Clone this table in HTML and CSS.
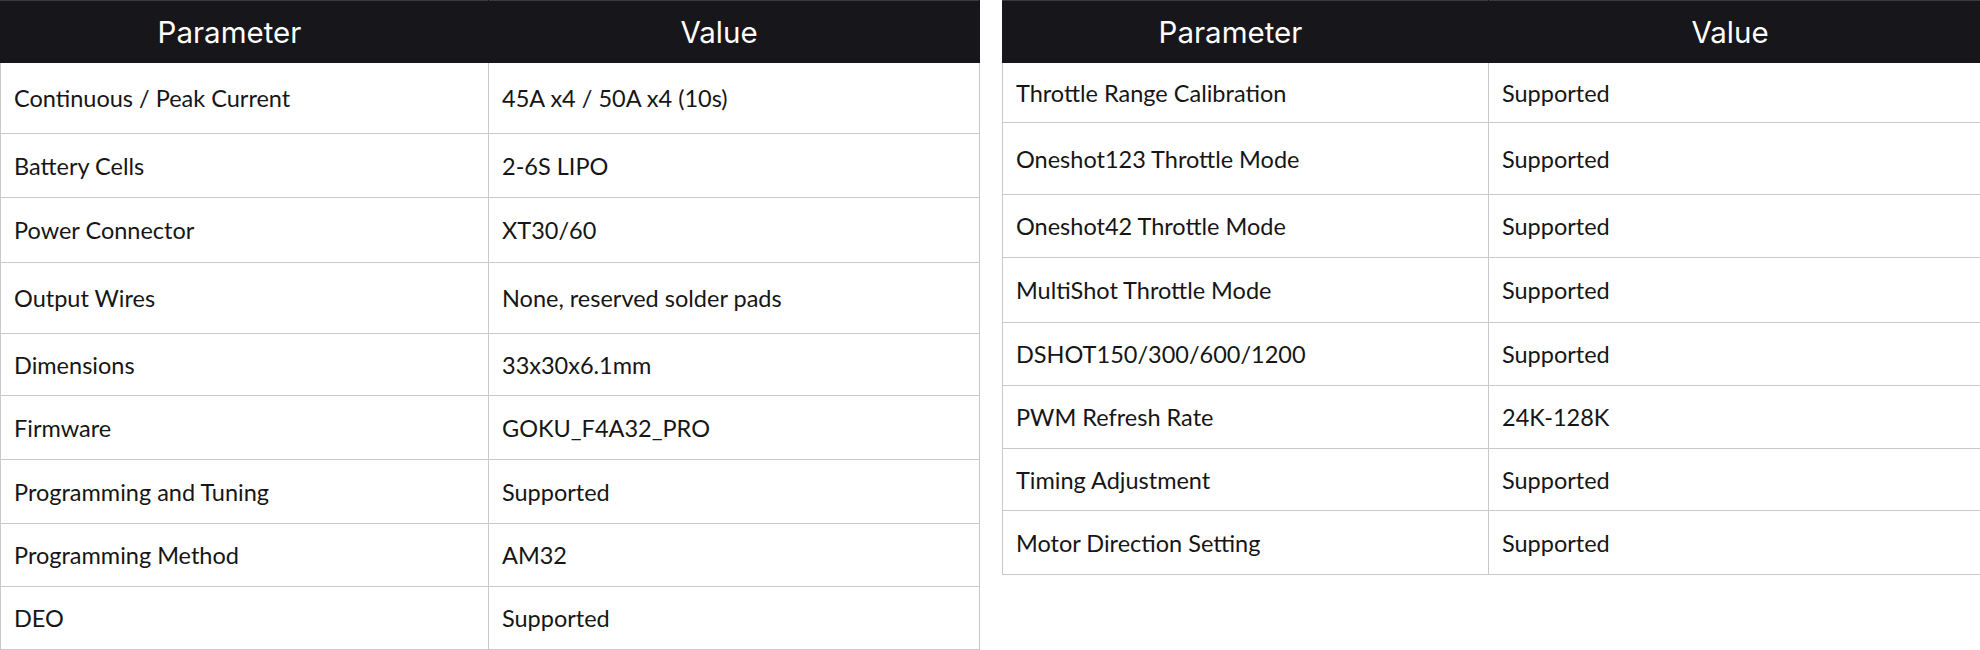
FILE: index.html
```html
<!DOCTYPE html>
<html>
<head>
<meta charset="utf-8">
<link rel="stylesheet" href="styles.css">
</head>
<body>
<div class="page">
  <table class="spec spec-left">
    <colgroup><col class="c1"><col class="c2"></colgroup>
    <thead><tr><th>Parameter</th><th>Value</th></tr></thead>
    <tbody>
      <tr class="h71"><td>Continuous / Peak Current</td><td>45A x4 / 50A x4 (10s)</td></tr>
      <tr class="h64"><td>Battery Cells</td><td>2-6S LIPO</td></tr>
      <tr class="h65"><td>Power Connector</td><td>XT30/60</td></tr>
      <tr class="h71"><td>Output Wires</td><td>None, reserved solder pads</td></tr>
      <tr class="h62"><td>Dimensions</td><td>33x30x6.1mm</td></tr>
      <tr class="h64"><td>Firmware</td><td>GOKU_F4A32_PRO</td></tr>
      <tr class="h64"><td>Programming and Tuning</td><td>Supported</td></tr>
      <tr class="h63"><td>Programming Method</td><td>AM32</td></tr>
      <tr class="h63"><td>DEO</td><td>Supported</td></tr>
    </tbody>
  </table>
  <table class="spec spec-right">
    <colgroup><col class="c1"><col class="c2"></colgroup>
    <thead><tr><th>Parameter</th><th>Value</th></tr></thead>
    <tbody>
      <tr class="h60"><td>Throttle Range Calibration</td><td>Supported</td></tr>
      <tr class="h72"><td>Oneshot123 Throttle Mode</td><td>Supported</td></tr>
      <tr class="h63"><td>Oneshot42 Throttle Mode</td><td>Supported</td></tr>
      <tr class="h65"><td>MultiShot Throttle Mode</td><td>Supported</td></tr>
      <tr class="h63"><td>DSHOT150/300/600/1200</td><td>Supported</td></tr>
      <tr class="h63"><td>PWM Refresh Rate</td><td>24K-128K</td></tr>
      <tr class="h62"><td>Timing Adjustment</td><td>Supported</td></tr>
      <tr class="h64"><td>Motor Direction Setting</td><td>Supported</td></tr>
    </tbody>
  </table>
</div>
</body>
</html>
```
FILE: styles.css
```css
html, body {
  margin: 0;
  padding: 0;
  background: #ffffff;
  overflow: hidden;
}
body {
  width: 1980px;
  height: 650px;
  font-family: "Lato", "Liberation Sans", sans-serif;
  color: #161616;
}
.page {
  display: flex;
  align-items: flex-start;
  gap: 22px;
  width: 2100px;
}
.spec {
  border-collapse: collapse;
  table-layout: fixed;
  flex: none;
}
.spec-left { width: 980px; }
.spec-left .c1 { width: 488px; }
.spec-right { width: 1000px; }
.spec-right .c1 { width: 486px; }
.spec th {
  background: #17161a;
  color: #ffffff;
  font-family: "Inter", "Lato", sans-serif;
  font-weight: 400;
  font-size: 29.5px;
  height: 61px;
  padding: 0 30px 0 0;
  text-align: center;
  border: 1px solid #17161a;
  border-top-color: #3a3a3e;
}
.spec td {
  border: 1px solid #c9c9c9;
  padding: 0 13px;
  font-size: 23.5px;
  vertical-align: middle;
  white-space: nowrap;
}
.h60 td { height: 59px; }
.h62 td { height: 61px; }
.h63 td { height: 62px; }
.h64 td { height: 63px; }
.h65 td { height: 64px; }
.h71 td { height: 70px; }
.h72 td { height: 71px; }
```
